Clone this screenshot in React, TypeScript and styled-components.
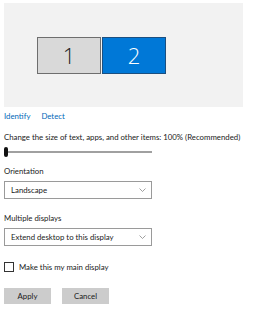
import styled, { createGlobalStyle } from 'styled-components'

const GlobalStyle = createGlobalStyle`
   body {
      margin: 0;
      background: #ffffff;
      font-family: Lato, 'Open Sans', sans-serif;
      color: #1a1a1a;
   }
`

const Page = styled.div`
   width: 260px;
   height: 315px;
   padding: 3px 0 0 4px;
   box-sizing: border-box;
   display: flex;
   flex-direction: column;
   font-size: 7.8px;
   white-space: nowrap;
`

const Preview = styled.div`
   width: 239px;
   height: 104px;
   background: #f2f2f2;
   display: flex;
   align-items: center;
   padding-left: 33px;
   box-sizing: border-box;
   gap: 1px;
`

const Monitor = styled.div<{ $active?: boolean }>`
   width: 64px;
   height: 37px;
   box-sizing: border-box;
   border: 1px solid ${p => (p.$active ? '#1b4f80' : '#6e6e6e')};
   background: ${p => (p.$active ? '#0078d7' : '#d9d9d9')};
   color: ${p => (p.$active ? '#ffffff' : '#222222')};
   display: flex;
   align-items: center;
   justify-content: center;
   font-family: 'Open Sans', sans-serif;
   font-size: 22px;
   font-weight: 300;
   line-height: 1;
`

const Links = styled.div`
   display: flex;
   gap: 11px;
   margin-top: 3px;
   height: 12px;
   align-items: center;
`

const Link = styled.span`
   color: #0067b8;
`

const Label = styled.div<{ $top: number }>`
   margin-top: ${p => p.$top}px;
   height: 12px;
   line-height: 12px;
`

const Slider = styled.div`
   width: 148px;
   height: 10px;
   margin-top: 4px;
   display: flex;
   align-items: center;
`

const Thumb = styled.div`
   width: 4px;
   height: 10px;
   border-radius: 2px;
   background: #111111;
`

const Track = styled.div`
   flex: 1;
   height: 2px;
   background: #a0a0a0;
`

const Select = styled.div`
   width: 148px;
   height: 18px;
   margin-top: 4px;
   box-sizing: border-box;
   border: 1px solid #9a9a9a;
   display: flex;
   align-items: center;
   justify-content: space-between;
   padding: 0 5px 0 6px;
`

const Chevron = () => (
   <svg width="7" height="4" viewBox="0 0 7 4">
      <path d="M0.5 0.5 L3.5 3.5 L6.5 0.5" fill="none" stroke="#888" strokeWidth="0.8" />
   </svg>
)

const CheckRow = styled.div`
   display: flex;
   align-items: center;
   gap: 5px;
   margin-top: 16px;
   height: 10px;
`

const Box = styled.div`
   width: 10px;
   height: 10px;
   box-sizing: border-box;
   border: 1px solid #333333;
`

const Buttons = styled.div`
   display: flex;
   gap: 11px;
   margin-top: 16px;
`

const Button = styled.div`
   width: 47px;
   height: 16px;
   background: #cccccc;
   display: flex;
   align-items: center;
   justify-content: center;
`

export default function App() {
   return (
      <>
         <GlobalStyle />
         <Page>
            <Preview>
               <Monitor>1</Monitor>
               <Monitor $active>2</Monitor>
            </Preview>
            <Links>
               <Link>Identify</Link>
               <Link>Detect</Link>
            </Links>
            <Label $top={9}>Change the size of text, apps, and other items: 100% (Recommended)</Label>
            <Slider>
               <Thumb />
               <Track />
            </Slider>
            <Label $top={8}>Orientation</Label>
            <Select>
               <span>Landscape</span>
               <Chevron />
            </Select>
            <Label $top={13}>Multiple displays</Label>
            <Select>
               <span>Extend desktop to this display</span>
               <Chevron />
            </Select>
            <CheckRow>
               <Box />
               <span>Make this my main display</span>
            </CheckRow>
            <Buttons>
               <Button>Apply</Button>
               <Button>Cancel</Button>
            </Buttons>
         </Page>
      </>
   )
}
